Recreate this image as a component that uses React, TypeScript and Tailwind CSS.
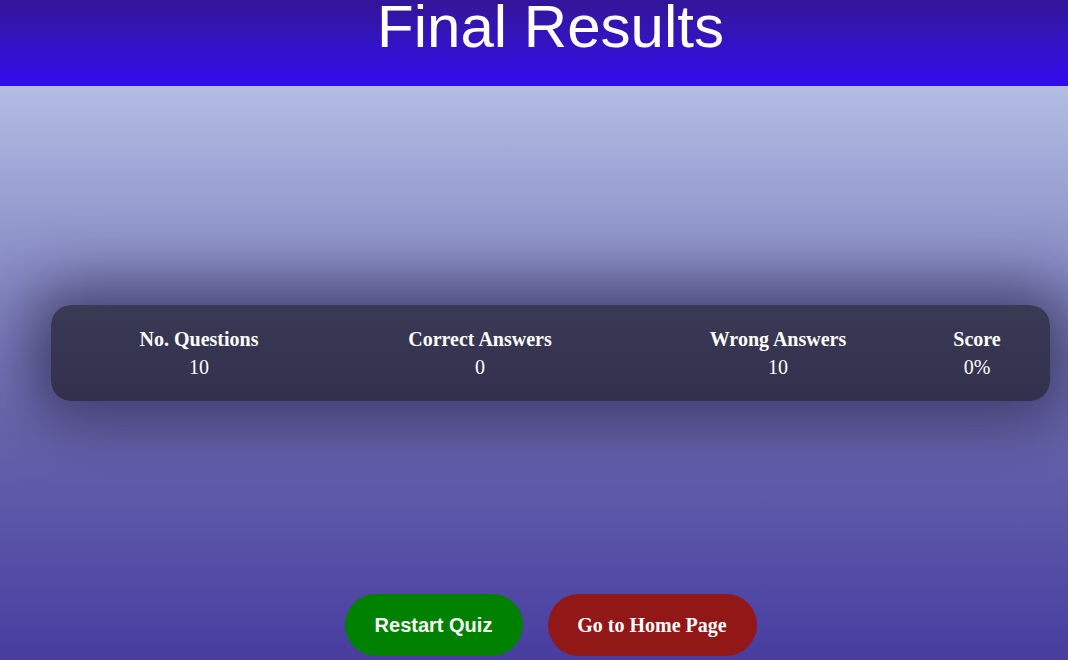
export default function App() {
  const stats = [
    { label: 'No. Questions', value: '10' },
    { label: 'Correct Answers', value: '0' },
    { label: 'Wrong Answers', value: '10' },
    { label: 'Score', value: '0%' },
  ];

  return (
    <div className="w-full h-[660px] overflow-hidden">
      <div className="w-[1101px] h-[660px] flex flex-col">
        {/* Header */}
        <header className="h-[86px] shrink-0 bg-gradient-to-b from-[#331598] to-[#3109ef]">
          <h1 className="text-center text-white text-[60px] leading-[54px] font-['Liberation_Sans',Arial,sans-serif]">
            Final Results
          </h1>
        </header>

        {/* Body */}
        <main className="flex-1 flex flex-col items-center bg-gradient-to-b from-[#b3bde3] via-[#6764ab] via-60% to-[#483ca0] font-['Liberation_Serif','Times_New_Roman',serif]">
          <div className="mt-[219px] w-[999px] h-[96px] rounded-[20px] bg-gradient-to-b from-[#3a3a55] to-[#33304e] shadow-[0_0_60px_20px_rgba(20,18,50,0.55)] grid grid-cols-[296px_266px_330px_68px] items-center text-white">
            {stats.map((s) => (
              <div key={s.label} className="flex flex-col items-center">
                <span className="font-bold text-[20px] leading-[28px]">{s.label}</span>
                <span className="text-[20px] leading-[28px]">{s.value}</span>
              </div>
            ))}
          </div>

          <div className="mt-[193px] flex gap-[25px]">
            <button className="w-[178px] h-[62px] rounded-full bg-[#008000] text-white font-bold text-[20px] font-['Liberation_Sans',Arial,sans-serif]">
              Restart Quiz
            </button>
            <button className="w-[209px] h-[62px] rounded-full bg-[#921717] text-white font-bold text-[20px] font-['Liberation_Serif','Times_New_Roman',serif]">
              Go to Home Page
            </button>
          </div>
        </main>
      </div>
    </div>
  );
}
